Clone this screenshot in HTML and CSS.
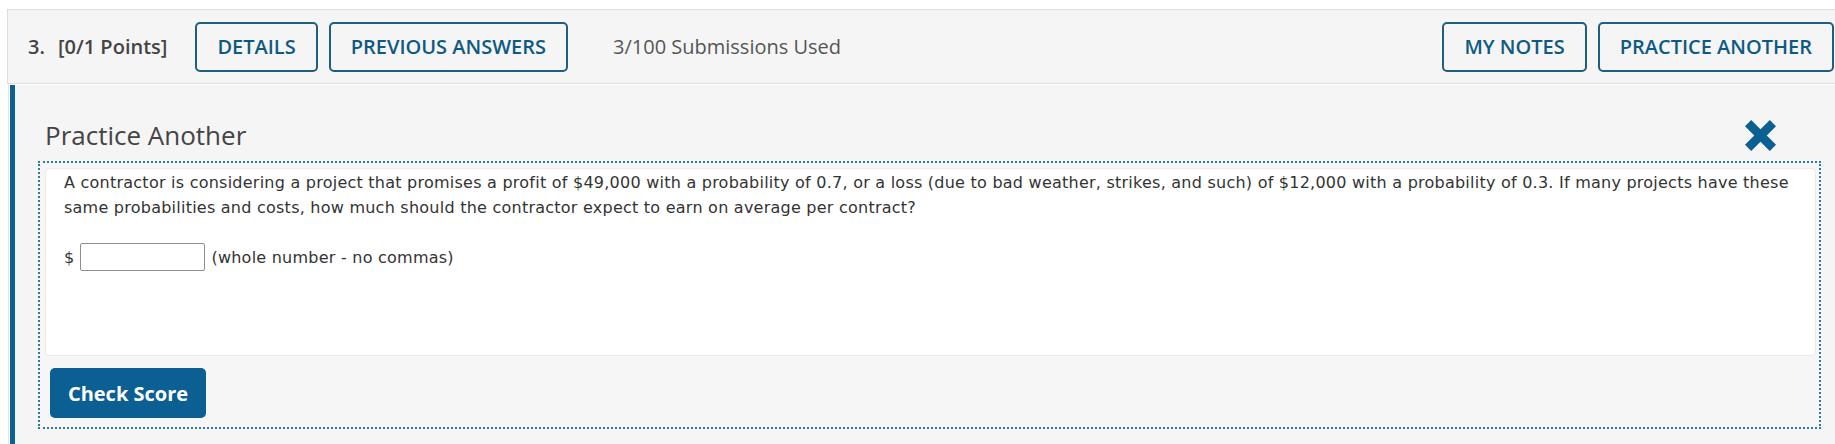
FILE: index.html
```html
<!DOCTYPE html>
<html lang="en">
<head>
<meta charset="utf-8">
<title>Question 3 - Practice Another</title>
<link rel="stylesheet" href="styles.css">
</head>
<body>
<div class="question">
  <div class="q-header">
    <div class="q-title"><span class="q-num">3.</span><span class="q-points">[0/1 Points]</span></div>
    <div class="q-tools">
      <button class="outline-btn">DETAILS</button>
      <button class="outline-btn">PREVIOUS ANSWERS</button>
    </div>
    <span class="q-subs">3/100 Submissions Used</span>
    <div class="q-actions">
      <button class="outline-btn">MY NOTES</button>
      <button class="outline-btn">PRACTICE ANOTHER</button>
    </div>
  </div>
  <div class="panel-wrap">
    <div class="panel">
      <div class="panel-head">
        <h2 class="panel-title">Practice Another</h2>
        <button class="close-btn" aria-label="Close">
          <svg width="31" height="31" viewBox="0 0 30 30" aria-hidden="true">
            <line x1="3" y1="3" x2="27" y2="27" stroke="#0b5f93" stroke-width="8.5"/>
            <line x1="27" y1="3" x2="3" y2="27" stroke="#0b5f93" stroke-width="8.5"/>
          </svg>
        </button>
      </div>
      <div class="practice">
        <div class="problem">
          <p class="problem-text">A contractor is considering a project that promises a profit of $49,000 with a probability of 0.7, or a loss (due to bad weather, strikes, and such) of $12,000 with a probability of 0.3. If many projects have these same probabilities and costs, how much should the contractor expect to earn on average per contract?</p>
          <div class="answer">
            <span class="dollar">$</span>
            <input class="answer-input" type="text" aria-label="answer">
            <span class="hint">(whole number - no commas)</span>
          </div>
        </div>
        <button class="check-btn">Check Score</button>
      </div>
    </div>
  </div>
</div>
</body>
</html>
```

FILE: styles.css
```css
html, body {
  margin: 0;
  padding: 0;
  background: #ffffff;
  overflow: hidden;
}

.question {
  margin: 9px 0 0 7px;
}

.q-header {
  display: flex;
  align-items: center;
  height: 75px;
  box-sizing: border-box;
  background: #f5f5f5;
  border: 1px solid #dedede;
  border-right: none;
  padding: 0 1px 0 20px;
  font-family: "Open Sans", sans-serif;
}

.q-title {
  display: flex;
  font-size: 20px;
  font-weight: 600;
  color: #444444;
  margin-right: 28px;
}

.q-points {
  margin-left: 13px;
}

.q-tools,
.q-actions {
  display: flex;
  gap: 11px;
}

.q-actions {
  margin-left: auto;
}

.outline-btn {
  height: 50px;
  padding: 0 20px;
  border: 2px solid #1e5f7e;
  border-radius: 5px;
  background: #f5f5f5;
  color: #0f5a82;
  font-family: "Open Sans", sans-serif;
  font-size: 20px;
  font-weight: 600;
  cursor: pointer;
}

.q-subs {
  margin-left: 45px;
  font-size: 20px;
  color: #555555;
}

.panel-wrap {
  margin: 1px 0 0 1px;
  border-left: 1px solid #e4e4e4;
  padding-left: 1px;
}

.panel {
  border-left: 5px solid #0b5f93;
  background: #f5f5f5;
  padding: 32px 14px 20px 23px;
}

.panel-head {
  display: flex;
  align-items: center;
  justify-content: space-between;
  height: 36px;
  margin: 0 45px 8px 7px;
}

.panel-title {
  margin: 0;
  font-family: "Open Sans", sans-serif;
  font-size: 26px;
  font-weight: 400;
  line-height: 36px;
  color: #444444;
}

.close-btn {
  display: flex;
  width: 31px;
  height: 31px;
  padding: 0;
  border: 0;
  background: none;
  cursor: pointer;
}

.practice {
  border: 2px dotted #2a7d9c;
  padding: 5px 3px 9px 5px;
  background: #f6f6f6;
}

.problem {
  height: 188px;
  box-sizing: border-box;
  background: #ffffff;
  border: 1px solid #efe7e4;
  border-radius: 4px;
  padding: 1px 18px 0 18px;
  font-family: "DejaVu Sans", Verdana, sans-serif;
  font-size: 16px;
  line-height: 25px;
  letter-spacing: 0.24px;
  color: #333333;
}

.problem-text {
  margin: 0;
}

.answer {
  display: flex;
  align-items: center;
  margin-top: 23px;
}

.answer-input {
  width: 125px;
  height: 28px;
  box-sizing: border-box;
  margin: 0 6px;
  border: 1px solid #8d8d8d;
  border-radius: 2px;
  background: #ffffff;
}

.check-btn {
  display: block;
  margin: 12px 0 0 5px;
  width: 156px;
  height: 50px;
  border: 0;
  border-radius: 5px;
  background: #0b5f93;
  color: #ffffff;
  font-family: "Open Sans", sans-serif;
  font-size: 20px;
  font-weight: 700;
  cursor: pointer;
}
```
